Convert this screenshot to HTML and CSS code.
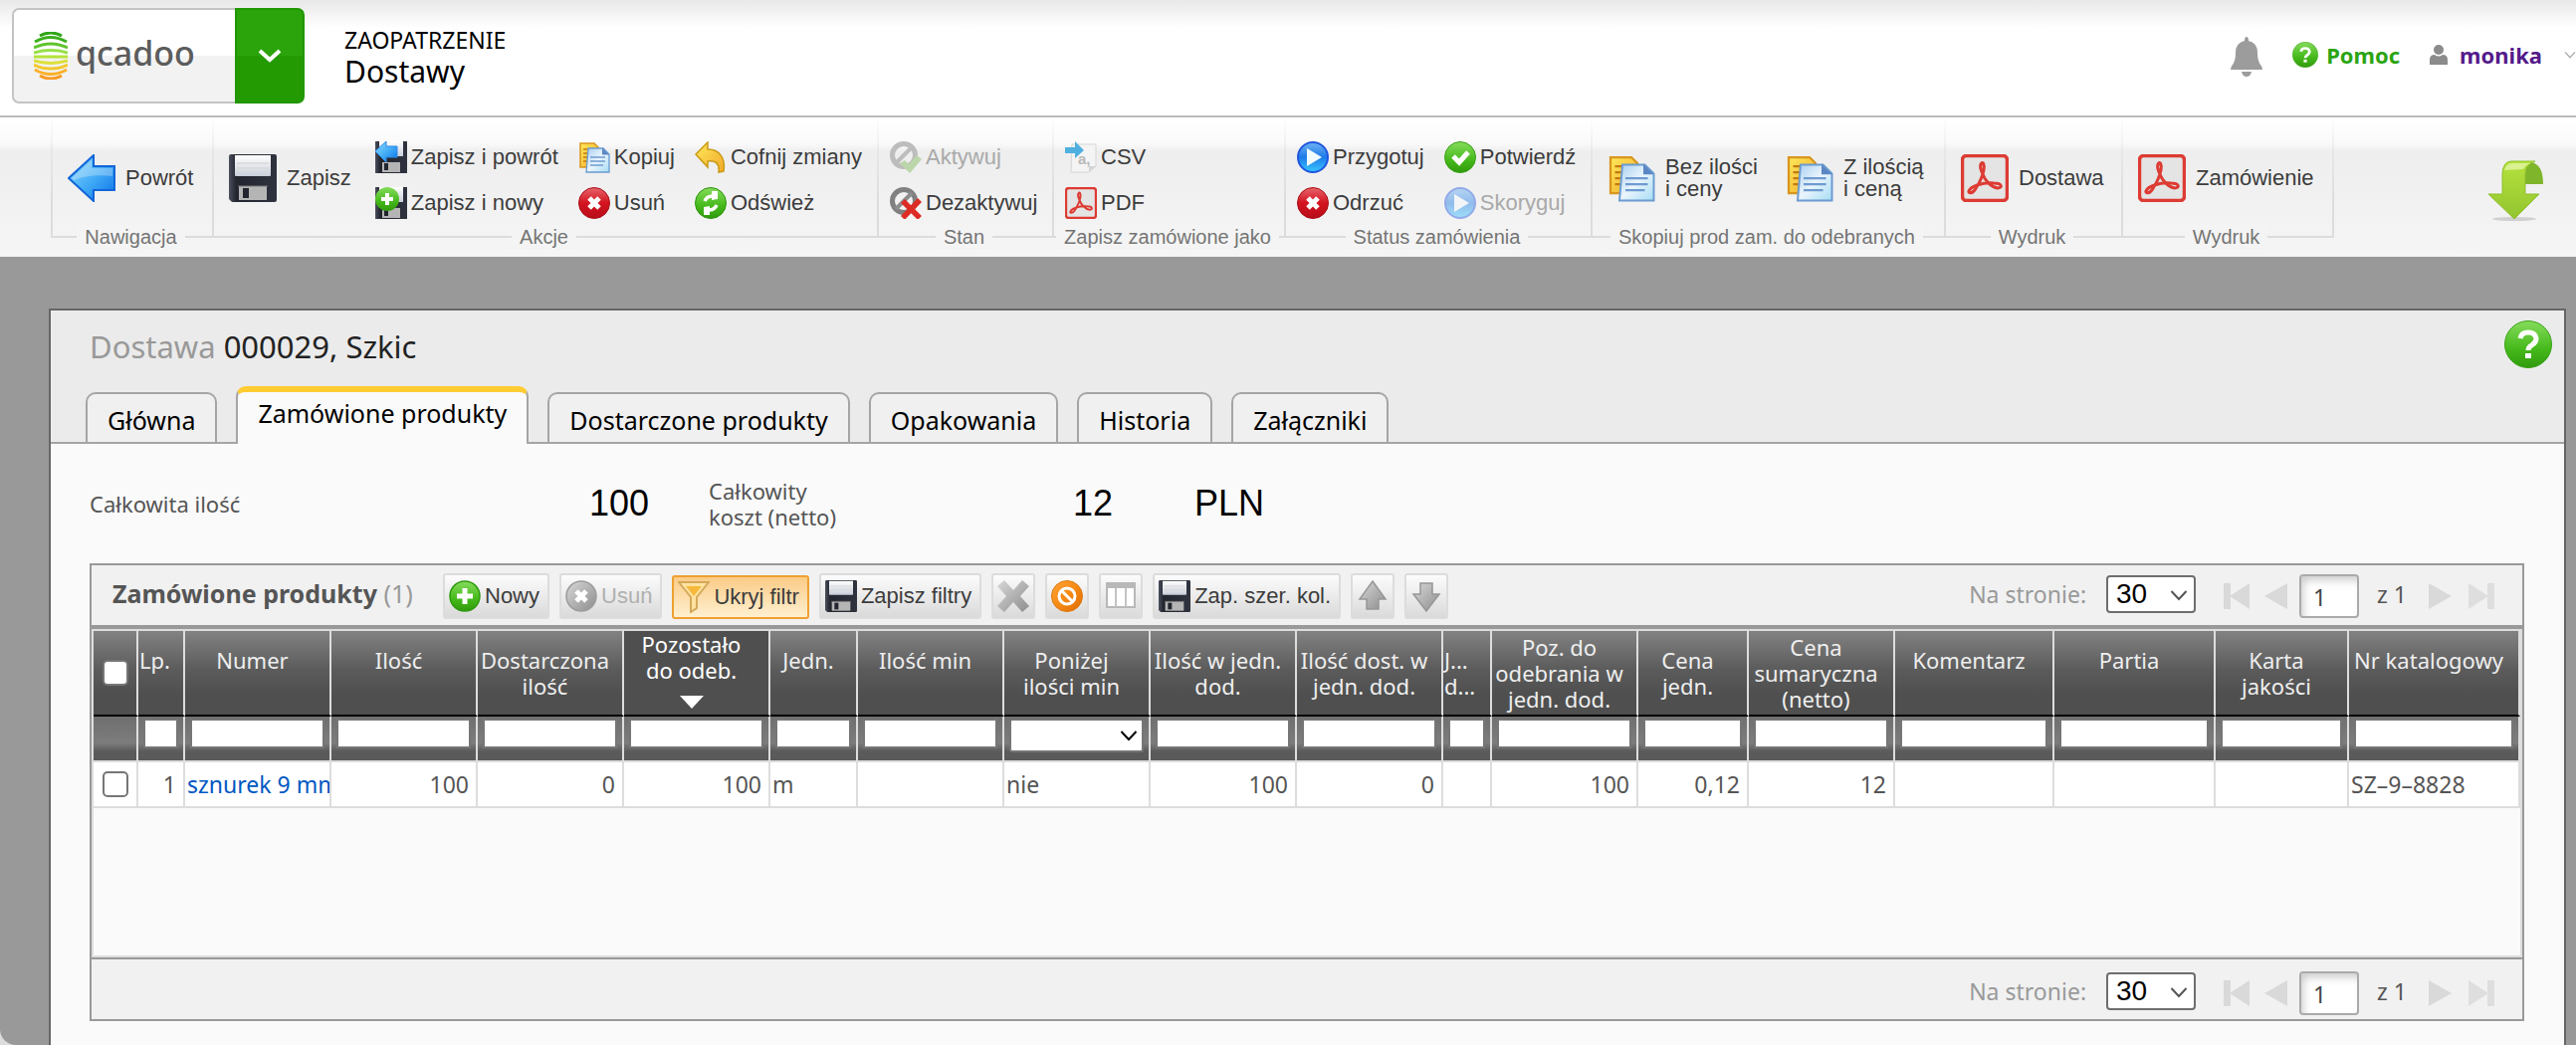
FILE: index.html
```html
<!DOCTYPE html>
<html lang="pl">
<head>
<meta charset="utf-8">
<meta name="viewport" content="width=device-width, initial-scale=1">
<title>Dostawy</title>
<link rel="stylesheet" href="styles.css">
</head>
<body>
<svg class="sprite" aria-hidden="true">
  <defs>
    <linearGradient id="g-blue" x1="0" y1="0" x2="1" y2="1"><stop offset="0" stop-color="#8fdcff"/><stop offset=".55" stop-color="#3fa9f5"/><stop offset="1" stop-color="#0a6fe8"/></linearGradient>
    <linearGradient id="g-play" x1="0" y1="0" x2="0" y2="1"><stop offset="0" stop-color="#6fb4f4"/><stop offset=".5" stop-color="#1e7be8"/><stop offset="1" stop-color="#39c8ff"/></linearGradient>
    <linearGradient id="g-green" x1="0" y1="0" x2="0" y2="1"><stop offset="0" stop-color="#86dc5c"/><stop offset=".6" stop-color="#45b91b"/><stop offset="1" stop-color="#319a0c"/></linearGradient>
    <linearGradient id="g-red" x1="0" y1="0" x2="0" y2="1"><stop offset="0" stop-color="#e8646c"/><stop offset=".5" stop-color="#d3141f"/><stop offset="1" stop-color="#b80d18"/></linearGradient>
    <linearGradient id="g-grey" x1="0" y1="0" x2="1" y2="1"><stop offset="0" stop-color="#d8d8d8"/><stop offset="1" stop-color="#8d8d8d"/></linearGradient>
    <linearGradient id="g-disk" x1="0" y1="0" x2="1" y2="0"><stop offset="0" stop-color="#4c5160"/><stop offset=".15" stop-color="#23262f"/><stop offset="1" stop-color="#2f333f"/></linearGradient>
    <linearGradient id="g-paper" x1="0" y1="0" x2="0" y2="1"><stop offset="0" stop-color="#ffffff"/><stop offset="1" stop-color="#c9cfda"/></linearGradient>
    <linearGradient id="g-doc" x1="0" y1="0" x2="1" y2="1"><stop offset="0" stop-color="#a9cff0"/><stop offset=".5" stop-color="#eaf5fd"/><stop offset="1" stop-color="#a5dcf4"/></linearGradient>
    <linearGradient id="g-yellow" x1="0" y1="0" x2="1" y2="1"><stop offset="0" stop-color="#ffe95a"/><stop offset="1" stop-color="#f0a92a"/></linearGradient>
    <linearGradient id="g-lime" x1="0" y1="0" x2="0" y2="1"><stop offset="0" stop-color="#b5e23c"/><stop offset="1" stop-color="#93c430"/></linearGradient>
    <linearGradient id="g-orange" x1="0" y1="0" x2="1" y2="1"><stop offset="0" stop-color="#ffa53a"/><stop offset=".5" stop-color="#f68a14"/><stop offset="1" stop-color="#e06c00"/></linearGradient>
  </defs>
  <symbol id="i-back" viewBox="0 0 48 48"><path d="M26 1v11h21v24H26v11L1 24z" fill="url(#g-blue)" stroke="#1265d8" stroke-width="2"/><path d="M24 6v8h21v8C30 20 16 22 6 26l-2-2z" fill="#fff" opacity=".28"/></symbol>
  <symbol id="i-disk" viewBox="0 0 48 48"><path d="M0 2q0-2 2-2h44q2 0 2 2v44q0 2-2 2H3l-3-3z" fill="url(#g-disk)"/><path d="M6 1h36v20q0 1-1 1H7q-1 0-1-1z" fill="url(#g-paper)"/><path d="M8 9h32M8 14h32" stroke="#d8d8d8" stroke-width="1.5"/><path d="M10 32h28v14H10z" fill="#b5b5b5"/><path d="M14 34h6v10h-6z" fill="#23262f"/><path d="M9 32h30" stroke="#777" stroke-width="1"/></symbol>
  <symbol id="i-diskback" viewBox="0 0 32 32"><path d="M0 0h32v32H0z" fill="url(#g-disk)"/><path d="M4 0h24v15H4z" fill="url(#g-paper)"/><path d="M7 21h18v10H7z" fill="#b5b5b5"/><path d="M9 22h4v7H9z" fill="#23262f"/><path d="M11 0v5h11v11H11v5L0 10z" fill="url(#g-blue)" stroke="#2d8ce8"/></symbol>
  <symbol id="i-disknew" viewBox="0 0 32 32"><path d="M0 0h32v32H0z" fill="url(#g-disk)"/><path d="M4 0h24v15H4z" fill="url(#g-paper)"/><path d="M7 21h18v10H7z" fill="#b5b5b5"/><path d="M9 22h4v7H9z" fill="#23262f"/><circle cx="12" cy="12" r="12" fill="url(#g-green)"/><path d="M12 6v12M6 12h12" stroke="#fff" stroke-width="4"/></symbol>
  <symbol id="i-copy" viewBox="0 0 32 32"><path d="M2 2h14l4 4v20H2z" fill="url(#g-yellow)" stroke="#d9951f" stroke-width="1.5"/><path d="M5 8h5M5 12h5M5 16h5M5 20h4" stroke="#c47a10" stroke-width="1.5"/><path d="M10 7h15l6 6v18H8z" fill="url(#g-doc)" stroke="#6b9bd0" stroke-width="1.3"/><path d="M24 6.500l7 7h-7z" fill="#5b87c4"/><path d="M12 16h15M12 20h15M12 24h13" stroke="#6f9ad0" stroke-width="1.5"/></symbol>
  <symbol id="i-delete" viewBox="0 0 32 32"><circle cx="16" cy="16" r="15.500" fill="url(#g-red)" stroke="#a80f18"/><path d="M11 11l10 10M21 11L11 21" stroke="#fff" stroke-width="5"/></symbol>
  <symbol id="i-undo" viewBox="0 0 32 32"><path d="M13 1v7c12 0 18 9 16 22l-5 1c1-8-2-12-11-11v6L1 13z" fill="url(#g-yellow)" stroke="#c99a14" stroke-width="1.500"/></symbol>
  <symbol id="i-refresh" viewBox="0 0 32 32"><circle cx="16" cy="16" r="15.500" fill="url(#g-green)" stroke="#2d930c"/><path d="M10 14q2-5 8-5M22 18q-2 5-8 5" fill="none" stroke="#fff" stroke-width="3.500"/><path d="M17 4h6v8l-6 1zM15 28H9v-8l6-1z" fill="#fff"/></symbol>
  <symbol id="i-on" viewBox="0 0 32 32"><circle cx="14" cy="14" r="11.500" fill="none" stroke="#bdbdbd" stroke-width="5"/><path d="M6 22L22 6" stroke="#bdbdbd" stroke-width="4"/><path d="M10 22l5-3 4 4 8-9 5 4-12 14z" fill="#bcd6ab"/></symbol>
  <symbol id="i-off" viewBox="0 0 32 32"><circle cx="14" cy="14" r="11.500" fill="none" stroke="#808080" stroke-width="5"/><path d="M6 22L22 6" stroke="#8d8d8d" stroke-width="4"/><path d="M13 14l17 17M30 13L13 31" stroke="#dd2b25" stroke-width="5.500"/></symbol>
  <symbol id="i-pdf" viewBox="0 0 48 48"><rect x="1.500" y="1.500" width="45" height="45" rx="4" fill="#e4e4e4" stroke="#dd3b33" stroke-width="3.500"/><path d="M20 10c2-4 4 0 3 6-1 5-5 14-9 20-3 4-7 3-6 1 2-5 14-9 25-8 9 0 9 5 4 5-7-1-13-8-15-14-2-4-3-8-2-10z" fill="none" stroke="#dd3b33" stroke-width="3"/></symbol>
  <symbol id="i-play" viewBox="0 0 32 32"><circle cx="16" cy="16" r="15" fill="url(#g-play)" stroke="#1f55e0" stroke-width="2"/><path d="M10 7v18l15-9z" fill="#f2fbff"/></symbol>
  <symbol id="i-ok" viewBox="0 0 32 32"><circle cx="16" cy="16" r="15.500" fill="url(#g-green)" stroke="#3aa015"/><path d="M9 15l6 6 9-10" fill="none" stroke="#fff" stroke-width="5"/></symbol>
  <symbol id="i-plus" viewBox="0 0 32 32"><circle cx="16" cy="16" r="15" fill="url(#g-green)" stroke="#2f9a10" stroke-width="1.500"/><path d="M16 8v16M8 16h16" stroke="#fff" stroke-width="5"/></symbol>
  <symbol id="i-del-off" viewBox="0 0 32 32"><circle cx="16" cy="16" r="15" fill="url(#g-grey)" stroke="#9c9c9c" stroke-width="1.500"/><path d="M11 11l10 10M21 11L11 21" stroke="#fff" stroke-width="5"/></symbol>
  <symbol id="i-funnel" viewBox="0 0 32 32"><path d="M1 1h30L19 16v11l-6 4V16z" fill="#ffe2a0" stroke="#d3a95a" stroke-width="2"/><path d="M8 5h16l-8 10z" fill="#f7b93c"/></symbol>
  <symbol id="i-cross" viewBox="0 0 32 32"><path d="M7 0l9 10 9-10 7 6-9 10 9 10-7 6-9-10-9 10-7-6 9-10L0 6z" fill="url(#g-grey)"/></symbol>
  <symbol id="i-ban" viewBox="0 0 32 32"><circle cx="16" cy="16" r="15.500" fill="url(#g-orange)" stroke="#dd7a12"/><circle cx="16" cy="16" r="8" fill="none" stroke="#fff" stroke-width="3"/><path d="M11 11l10 10" stroke="#fff" stroke-width="3"/></symbol>
  <symbol id="i-cols" viewBox="0 0 32 32"><path d="M2 3h28v24H2z" fill="#fff" stroke="#b8b8b8" stroke-width="2"/><path d="M2 3h28v5H2z" fill="#b8b8b8"/><path d="M11 8v19M21 8v19" stroke="#c4c4c4" stroke-width="2"/></symbol>
  <symbol id="i-up" viewBox="0 0 32 32"><path d="M16 1l13 18h-7v10H10V19H3z" fill="url(#g-grey)" stroke="#979797" stroke-width="1.500"/></symbol>
  <symbol id="i-down" viewBox="0 0 32 32"><path d="M16 31L3 14h7V3h12v11h7z" fill="url(#g-grey)" stroke="#979797" stroke-width="1.500"/></symbol>
  <symbol id="i-help" viewBox="0 0 48 48"><circle cx="24" cy="24" r="23.500" fill="url(#g-green)" stroke="#3aa318"/><path d="M16 18q1-6 8-6t8 6q0 4-4 6.500t-4 5.500" fill="none" stroke="#fff" stroke-width="5"/><path d="M21 33h6v5h-6z" fill="#fff"/></symbol>
  <symbol id="i-chev" viewBox="0 0 18 12"><path d="M1.500 2L9 10l7.500-8" fill="none" stroke="currentColor" stroke-width="2"/></symbol>
  <symbol id="i-first" viewBox="0 0 26 26"><path d="M0 0h7v26H0zM26 0v26L6 13z" fill="#d9d9d9"/></symbol>
  <symbol id="i-prev" viewBox="0 0 26 26"><path d="M24 0v26L1 13z" fill="#d9d9d9"/></symbol>
  <symbol id="i-next" viewBox="0 0 26 26"><path d="M2 0v26l23-13z" fill="#d9d9d9"/></symbol>
  <symbol id="i-last" viewBox="0 0 26 26"><path d="M19 0h7v26h-7zM0 0v26l20-13z" fill="#dedede"/></symbol>
</svg>

<header class="top">
  <div class="brand">
    <a class="logo" href="#">
      <svg width="34" height="48" viewBox="0 0 34 48"><g fill="none" stroke-width="3"><path d="M6 4q11-6 22 0" stroke="#2fa516"/><path d="M1 10q16-9 32 0" stroke="#3bb01c"/><path d="M0 16q17-8 34 0" stroke="#5fc42e"/><path d="M0 21q17-5 34 0" stroke="#97e04a"/><path d="M0 25h34" stroke="#b5e33a"/><path d="M0 29q17 5 34 0" stroke="#dde03a"/><path d="M0 33q17 8 34 0" stroke="#f2c92e"/><path d="M1 38q16 9 32 0" stroke="#fbb02a"/><path d="M6 44q11 6 22 0" stroke="#f89a22"/></g></svg>
      <span>qcadoo</span>
    </a>
    <button class="menu-toggle" type="button" aria-label="Menu"><svg width="24" height="14" viewBox="0 0 24 14"><path d="M2 2l10 9 10-9" fill="none" stroke="#fff" stroke-width="4"/></svg></button>
  </div>
  <div class="where"><span class="section">ZAOPATRZENIE</span><h1>Dostawy</h1></div>
  <nav class="account">
    <a class="bell" href="#" aria-label="Powiadomienia"><svg width="32" height="40" viewBox="0 0 32 40"><path d="M16 0q2 0 2 4 9 2 9 12 0 8 3 12 2 2 2 5H0q0-3 2-5 3-4 3-12Q5 6 14 4q0-4 2-4zM11 35h10q-1 5-5 5t-5-5z" fill="#9c9c9c"/></svg></a>
    <a class="help-link" href="#"><svg width="26" height="26"><use href="#i-help"/></svg>Pomoc</a>
    <a class="user" href="#"><svg width="18" height="20" viewBox="0 0 18 20"><circle cx="9" cy="5" r="5" fill="#8b8b8b"/><path d="M0 20v-5q0-5 5-5 4 3 8 0 5 0 5 5v5z" fill="#8b8b8b"/></svg>monika</a>
    <svg class="account-chev" width="12" height="8"><use href="#i-chev"/></svg>
  </nav>
</header>

<div class="ribbon">
  <div class="groups">
    <section class="group"><div class="tools"><button class="tool big" type="button"><svg><use href="#i-back"/></svg>Powrót</button></div><h2>Nawigacja</h2></section>
    <section class="group"><div class="tools">
      <button class="tool big" type="button"><svg><use href="#i-disk"/></svg>Zapisz</button>
      <div class="stack"><button class="tool" type="button"><svg><use href="#i-diskback"/></svg>Zapisz i powrót</button><button class="tool" type="button"><svg><use href="#i-disknew"/></svg>Zapisz i nowy</button></div>
      <div class="stack"><button class="tool" type="button"><svg><use href="#i-copy"/></svg>Kopiuj</button><button class="tool" type="button"><svg><use href="#i-delete"/></svg>Usuń</button></div>
      <div class="stack"><button class="tool" type="button"><svg><use href="#i-undo"/></svg>Cofnij zmiany</button><button class="tool" type="button"><svg><use href="#i-refresh"/></svg>Odśwież</button></div>
    </div><h2>Akcje</h2></section>
    <section class="group"><div class="tools"><div class="stack"><button class="tool" type="button" disabled><svg><use href="#i-on"/></svg>Aktywuj</button><button class="tool" type="button"><svg><use href="#i-off"/></svg>Dezaktywuj</button></div></div><h2>Stan</h2></section>
    <section class="group"><div class="tools"><div class="stack"><button class="tool" type="button"><svg viewBox="0 0 32 32"><path d="M7 3h24v22l-7 6H6z" fill="#f4f4f4" stroke="#d6d6d6"/><path d="M24 31v-6h7" fill="#d4d4d4"/><path d="M0 6h10V0l9 9-9 8v-5H0z" fill="#4fb0e0"/><text x="13" y="23" class="csv-glyph" aria-hidden="true">a,</text></svg>CSV</button><button class="tool" type="button"><svg><use href="#i-pdf"/></svg>PDF</button></div></div><h2>Zapisz zamówione jako</h2></section>
    <section class="group"><div class="tools">
      <div class="stack"><button class="tool" type="button"><svg><use href="#i-play"/></svg>Przygotuj</button><button class="tool" type="button"><svg><use href="#i-delete"/></svg>Odrzuć</button></div>
      <div class="stack"><button class="tool" type="button"><svg><use href="#i-ok"/></svg>Potwierdź</button><button class="tool" type="button" disabled><svg class="faded"><use href="#i-play"/></svg>Skoryguj</button></div>
    </div><h2>Status zamówienia</h2></section>
    <section class="group"><div class="tools"><button class="tool big" type="button"><svg><use href="#i-copy"/></svg><span>Bez ilości<br>i ceny</span></button><button class="tool big" type="button"><svg><use href="#i-copy"/></svg><span>Z ilością<br>i ceną</span></button></div><h2>Skopiuj prod zam. do odebranych</h2></section>
    <section class="group"><div class="tools"><button class="tool big" type="button"><svg><use href="#i-pdf"/></svg>Dostawa</button></div><h2>Wydruk</h2></section>
    <section class="group"><div class="tools"><button class="tool big" type="button"><svg><use href="#i-pdf"/></svg>Zamówienie</button></div><h2>Wydruk</h2></section>
  </div>
  <button class="more" type="button" aria-label="Więcej"><svg width="56" height="62" viewBox="0 0 56 62"><ellipse cx="27" cy="59" rx="22" ry="2" fill="#d0d0d0"/><path d="M32 5q4-4 12-3 12 2 12 22H38V12q0-5-6-7z" fill="#7fb52a"/><path d="M15 34V13Q16 1 24 1h24q-10 3-10 13v20h14L27 59 1 34z" fill="url(#g-lime)" stroke="#8fc02f"/><path d="M17 10q2-7 8-7h18q-5 2-7 6z" fill="#e2f5a8" opacity=".8"/></svg></button>
</div>

<main class="panel">
  <div class="panel-head">
    <div class="title-row"><h2 class="title"><span>Dostawa</span> 000029, Szkic</h2><a class="panel-help" href="#" aria-label="Pomoc"><svg width="48" height="48"><use href="#i-help"/></svg></a></div>
    <nav class="tabs"><a href="#">Główna</a><a class="active" href="#">Zamówione produkty</a><a href="#">Dostarczone produkty</a><a href="#">Opakowania</a><a href="#">Historia</a><a href="#">Załączniki</a></nav>
  </div>
  <div class="summary"><span class="label">Całkowita ilość</span><output>100</output><span class="label">Całkowity<br>koszt (netto)</span><output>12</output><span class="currency">PLN</span></div>

  <section class="grid">
    <div class="bar">
      <h3>Zamówione produkty <span>(1)</span></h3>
      <div class="actions">
        <button type="button"><svg><use href="#i-plus"/></svg>Nowy</button>
        <button type="button" disabled><svg><use href="#i-del-off"/></svg>Usuń</button>
        <button type="button" class="pressed"><svg><use href="#i-funnel"/></svg>Ukryj filtr</button>
        <button type="button"><svg><use href="#i-disk"/></svg>Zapisz filtry</button>
        <button type="button" class="icon" aria-label="Wyczyść filtr"><svg><use href="#i-cross"/></svg></button>
        <button type="button" class="icon" aria-label="Bez filtra"><svg><use href="#i-ban"/></svg></button>
        <button type="button" class="icon" aria-label="Kolumny"><svg><use href="#i-cols"/></svg></button>
        <button type="button"><svg><use href="#i-disk"/></svg>Zap. szer. kol.</button>
        <button type="button" class="icon" aria-label="W górę"><svg><use href="#i-up"/></svg></button>
        <button type="button" class="icon" aria-label="W dół"><svg><use href="#i-down"/></svg></button>
      </div>
      <div class="pager">
        <label for="per-top">Na stronie:</label>
        <span class="pick"><select id="per-top"><option>30</option></select><svg width="18" height="12"><use href="#i-chev"/></svg></span>
        <button type="button" aria-label="Pierwsza"><svg><use href="#i-first"/></svg></button><button type="button" aria-label="Poprzednia"><svg><use href="#i-prev"/></svg></button>
        <input type="text" value="1" aria-label="Strona"><span class="total">z 1</span>
        <button type="button" aria-label="Następna"><svg><use href="#i-next"/></svg></button><button type="button" aria-label="Ostatnia"><svg><use href="#i-last"/></svg></button>
      </div>
    </div>
    <div class="scroll">
      <table>
        <colgroup><col class="w45"><col class="w47"><col class="w147"><col class="w147"><col class="w147"><col class="w147"><col class="w88"><col class="w147"><col class="w147"><col class="w147"><col class="w147"><col class="w49"><col class="w147"><col class="w111"><col class="w147"><col class="w160"><col class="w162"><col class="w134"><col></colgroup>
        <thead>
          <tr class="heads">
            <th class="check"><input type="checkbox" aria-label="Zaznacz wszystkie"></th><th class="snug">Lp.</th><th>Numer</th><th>Ilość</th><th>Dostarczona<br>ilość</th>
            <th class="sorted">Pozostało<br>do odeb.<svg width="26" height="14" viewBox="0 0 26 14"><path d="M1 1h24L13 14z" fill="#fff"/></svg></th>
            <th>Jedn.</th><th>Ilość min</th><th>Poniżej<br>ilości min</th><th>Ilość w jedn.<br>dod.</th><th>Ilość dost. w<br>jedn. dod.</th><th class="snug">J...<br>d...</th><th class="tall">Poz. do<br>odebrania w<br>jedn. dod.</th><th>Cena<br>jedn.</th><th class="tall">Cena<br>sumaryczna<br>(netto)</th><th>Komentarz</th><th>Partia</th><th>Karta<br>jakości</th><th>Nr katalogowy</th>
          </tr>
          <tr class="filters">
            <td></td><td><input type="text" aria-label="Filtr: Lp."></td><td><input type="text" aria-label="Filtr: Numer"></td><td><input type="text" aria-label="Filtr: Ilość"></td><td><input type="text" aria-label="Filtr: Dostarczona ilość"></td><td><input type="text" aria-label="Filtr: Pozostało do odeb."></td><td><input type="text" aria-label="Filtr: Jedn."></td><td><input type="text" aria-label="Filtr: Ilość min"></td>
            <td><span class="pick"><select aria-label="Filtr: Poniżej ilości min"><option></option></select><svg width="18" height="12"><use href="#i-chev"/></svg></span></td>
            <td><input type="text" aria-label="Filtr: Ilość w jedn. dod."></td><td><input type="text" aria-label="Filtr: Ilość dost. w jedn. dod."></td><td><input type="text" aria-label="Filtr: Jedn. dod."></td><td><input type="text" aria-label="Filtr: Poz. do odebrania"></td><td><input type="text" aria-label="Filtr: Cena jedn."></td><td><input type="text" aria-label="Filtr: Cena sumaryczna"></td><td><input type="text" aria-label="Filtr: Komentarz"></td><td><input type="text" aria-label="Filtr: Partia"></td><td><input type="text" aria-label="Filtr: Karta jakości"></td><td><input type="text" aria-label="Filtr: Nr katalogowy"></td>
          </tr>
        </thead>
        <tbody>
          <tr><td class="check"><input type="checkbox" aria-label="Zaznacz wiersz 1"></td><td class="num">1</td><td><a href="#">sznurek 9 mm</a></td><td class="num">100</td><td class="num">0</td><td class="num">100</td><td>m</td><td></td><td>nie</td><td class="num">100</td><td class="num">0</td><td></td><td class="num">100</td><td class="num">0,12</td><td class="num">12</td><td></td><td></td><td></td><td>SZ–9–8828</td></tr>
        </tbody>
      </table>
    </div>
    <div class="bar foot">
      <div class="pager">
        <label for="per-bottom">Na stronie:</label>
        <span class="pick"><select id="per-bottom"><option>30</option></select><svg width="18" height="12"><use href="#i-chev"/></svg></span>
        <button type="button" aria-label="Pierwsza"><svg><use href="#i-first"/></svg></button><button type="button" aria-label="Poprzednia"><svg><use href="#i-prev"/></svg></button>
        <input type="text" value="1" aria-label="Strona"><span class="total">z 1</span>
        <button type="button" aria-label="Następna"><svg><use href="#i-next"/></svg></button><button type="button" aria-label="Ostatnia"><svg><use href="#i-last"/></svg></button>
      </div>
    </div>
  </section>
</main>
</body>
</html>
```
FILE: styles.css
```css
* { box-sizing: border-box; }
html { background: #dcdcdc; }
body {
  margin: 0;
  min-height: 100vh;
  display: flex;
  flex-direction: column;
  background: #999;
  border-bottom-left-radius: 16px;
  color: #000;
  font: 23px/26px "Noto Sans", "Open Sans", sans-serif;
  overflow-x: hidden;
}
h1, h2, h3 { margin: 0; font-weight: 400; }
a { color: inherit; text-decoration: none; }
button { padding: 0; border: 0; background: none; font: 22px/22px "Liberation Sans", Arial, sans-serif; color: #3c3c3c; }
svg { display: block; flex: none; }
.sprite { position: absolute; width: 0; height: 0; }
.csv-glyph { font: bold 15px "Liberation Sans", Arial, sans-serif; fill: #b8b8b8; }

/* Top bar */
.top {
  display: flex;
  align-items: flex-start;
  height: 118px;
  padding: 8px 0 0 12px;
  border-bottom: 2px solid #bbb;
  background: linear-gradient(#e8e8e8, #fff 28px);
}
.brand { display: flex; height: 96px; }
.logo {
  display: flex;
  align-items: center;
  gap: 8px;
  width: 224px;
  padding: 0 0 0 20px;
  border: 2px solid #c4c4c4;
  border-right: 0;
  border-radius: 7px 0 0 7px;
  background: linear-gradient(#fff 50%, #f2f2f2 50%);
  color: #5c5c5c;
  font-size: 34px;
  font-weight: 500;
}
.logo span { padding-bottom: 6px; }
.menu-toggle {
  display: grid;
  place-items: center;
  width: 70px;
  border: 2px solid #219703;
  border-radius: 0 7px 7px 0;
  background: linear-gradient(#2ba30b 50%, #239a02 50%);
}
.where { padding: 19px 0 0 40px; }
.section { display: block; line-height: 26px; }
.where h1 { font-size: 30px; line-height: 38px; }
.account { display: flex; align-items: center; margin-left: auto; height: 94px; font-size: 22px; font-weight: 700; }
.bell { padding: 4px 30px 0 0; }
.help-link, .user { display: flex; align-items: center; }
.help-link { gap: 8px; margin-right: 30px; color: #2ba413; }
.user { gap: 12px; margin-right: 22px; color: #551a8b; }
.account-chev { color: #aaa; }

/* Ribbon */
.ribbon {
  display: flex;
  align-items: flex-start;
  height: 140px;
  padding-left: 51px;
  background: linear-gradient(#fff, #fafafa 26px, #eee 34px, #f5f5f5);
}
.groups { display: grid; grid-template-columns: 162px 668px 176px 233px 308px 355px 178px 214px; }
.group {
  display: flex;
  flex-direction: column;
  align-items: center;
  height: 121px;
  padding: 24px 0 0 3px;
  border: solid;
  border-width: 0 0 2px 2px;
  border-image: linear-gradient(rgba(220, 220, 220, 0), #dcdcdc 70%) 2;
}
.group:last-child { border-right-width: 2px; }
.group h2 { margin: 6px 6px -14px 0; padding: 0 8px; background: #f4f4f4; color: #747474; font: 20px/24px "Liberation Sans", Arial, sans-serif; white-space: nowrap; }
.tools { display: flex; align-items: center; align-self: stretch; height: 78px; flex: none; }
.stack { display: grid; gap: 14px; justify-items: start; }
.tool { display: flex; align-items: center; gap: 4px; padding: 0 12px 0 8px; text-align: left; white-space: nowrap; }
.tool svg { width: 32px; height: 32px; }
.tool.big { gap: 10px; padding: 0 16px 4px 12px; }
.tool.big svg { width: 48px; height: 48px; }
.tool:disabled { color: #a9a9a9; }
.faded { opacity: .45; }
.more { margin: 43px 33px 0 auto; }

/* Panel */
.panel { flex: 1; margin: 52px 10px 0 49px; border: 2px solid #666; border-bottom: 0; background: #fafafa; }
.panel-head { padding-left: 35px; border-bottom: 2px solid #a5a5a5; background: #ebebeb; }
.title-row { display: flex; justify-content: space-between; padding: 10px 12px 0 4px; height: 76px; }
.title { padding-top: 8px; font-size: 31px; line-height: 36px; color: #222; }
.title span { color: #999; }
.tabs { display: flex; align-items: flex-end; gap: 19px; height: 56px; }
.tabs a { height: 50px; padding: 13px 20px 0; border: 2px solid #a5a5a5; border-bottom: 0; border-radius: 10px 10px 0 0; background: #f0f0f0; font-size: 25px; line-height: 26px; }
.tabs .active { height: 58px; margin-bottom: -2px; padding-top: 8px; border-top: 6px solid #fc3; background: #fafafa; }
.summary {
  display: grid;
  grid-template: 76px / 402px 160px 324px 142px 200px;
  align-items: center;
  height: 120px;
  padding: 22px 0 0 39px;
}
.label { color: #555; font-size: 22px; }
output + .label { padding-left: 60px; }
output { justify-self: end; }
output, .currency { font: 36px/52px "Liberation Sans", Arial, sans-serif; }
.currency { padding-left: 82px; }

/* Data grid */
.grid { margin: 0 40px 24px 39px; border: 2px solid #999; }
.bar { display: flex; align-items: flex-start; height: 64px; padding: 8px 28px 0 21px; border-bottom: 4px solid #999; background: #f1f1f1; }
.bar h3 { width: 332px; padding-top: 7px; font-size: 25px; font-weight: 700; color: #555; white-space: nowrap; }
.bar h3 span { font-weight: 400; color: #999; }
.actions { display: flex; gap: 10px; }
.actions button { display: flex; align-items: center; gap: 4px; height: 46px; padding: 0 8px 0 4px; border: 2px solid #dcdcdc; border-radius: 3px; background: linear-gradient(#fcfcfc, #dadada); white-space: nowrap; }
.actions svg { width: 32px; height: 32px; }
.actions .icon { padding: 0 4px; }
.actions button:disabled { color: #b0b0b0; }
.actions .pressed { height: 44px; margin-top: 2px; border-color: #f0a030; background: linear-gradient(#fbcb86, #fff0d0); }

.pager { display: flex; align-items: center; margin-left: auto; color: #555; height: 46px; }
.pager label { margin: 0 20px 4px 0; color: #999; }
.pager .pick { width: 90px; margin: 0 28px 4px 0; }
.pager button { margin-right: 14px; }
.pager button svg { width: 26px; height: 26px; }
.pager input { width: 60px; height: 44px; margin: 0 18px 0 -4px; padding: 2px 12px 0; border: 2px solid #aaa; border-radius: 4px; background: #fff; box-shadow: inset 4px 6px 8px -2px #ccc; font: inherit; color: #444; }
.pager .total { margin: 0 20px 4px 0; }
.pager .total + button { margin-right: 16px; }
.pager button:last-child { margin-right: 0; }
.pick { position: relative; display: block; }
.pick select { display: block; width: 100%; height: 38px; padding: 0 8px; border: 2px solid #6e6e6e; border-radius: 4px; background: #fff; font: 28px/32px "Liberation Sans", Arial, sans-serif; color: #000; appearance: none; }
.pick svg { position: absolute; right: 8px; top: 14px; pointer-events: none; }

.scroll { min-height: 330px; border: 2px solid #ddd; }
.foot { height: 62px; padding-top: 11px; border-top: 2px solid #999; border-bottom: 0; }
table { width: 100%; border-collapse: separate; border-spacing: 0; table-layout: fixed; }
.w45 { width: 45px; }
.w47 { width: 47px; }
.w49 { width: 49px; }
.w88 { width: 88px; }
.w111 { width: 111px; }
.w134 { width: 134px; }
.w147 { width: 147px; }
.w160 { width: 160px; }
.w162 { width: 162px; }
th, td { padding: 0; border-right: 2px solid #ddd; overflow: hidden; white-space: nowrap; }
th { height: 86px; padding: 16px 10px 0 0; border-bottom: 2px solid #000; background: linear-gradient(#828282, #5c5c5c 45%, #4f4f4f 75%); color: #eee; font-size: 22px; font-weight: 400; vertical-align: top; text-align: center; }
th.snug { padding-left: 1px; padding-right: 0; text-align: left; }
th.tall { padding-top: 3px; }
th.sorted { padding-top: 0; background: #4f4f4f; color: #fff; }
th.sorted svg { margin: 12px auto 0; }
th.check, td.check { padding: 0; text-align: center; vertical-align: middle; }
.filters td { height: 46px; padding: 2px 5px 0; border-bottom: 2px solid #ddd; background: linear-gradient(#6f6f6f, #7c7c7c 60%, #5a5a5a 80%); vertical-align: top; }
.filters input { display: block; width: 100%; height: 30px; border: 2px solid #767676; background: #fff; font: inherit; }
.filters select { height: 34px; border-radius: 3px; border-color: #767676; }
.filters .pick svg { top: 11px; right: 6px; }
tbody td { height: 46px; padding: 0 7px 1px 2px; border-bottom: 2px solid #ddd; background: #fff; color: #555; }
td.num { text-align: right; }
tbody a { color: #0057c2; }
input[type="checkbox"] { display: block; width: 26px; height: 26px; margin: 0 auto; border: 2px solid #767676; border-radius: 5px; background: #fff; appearance: none; }
```
